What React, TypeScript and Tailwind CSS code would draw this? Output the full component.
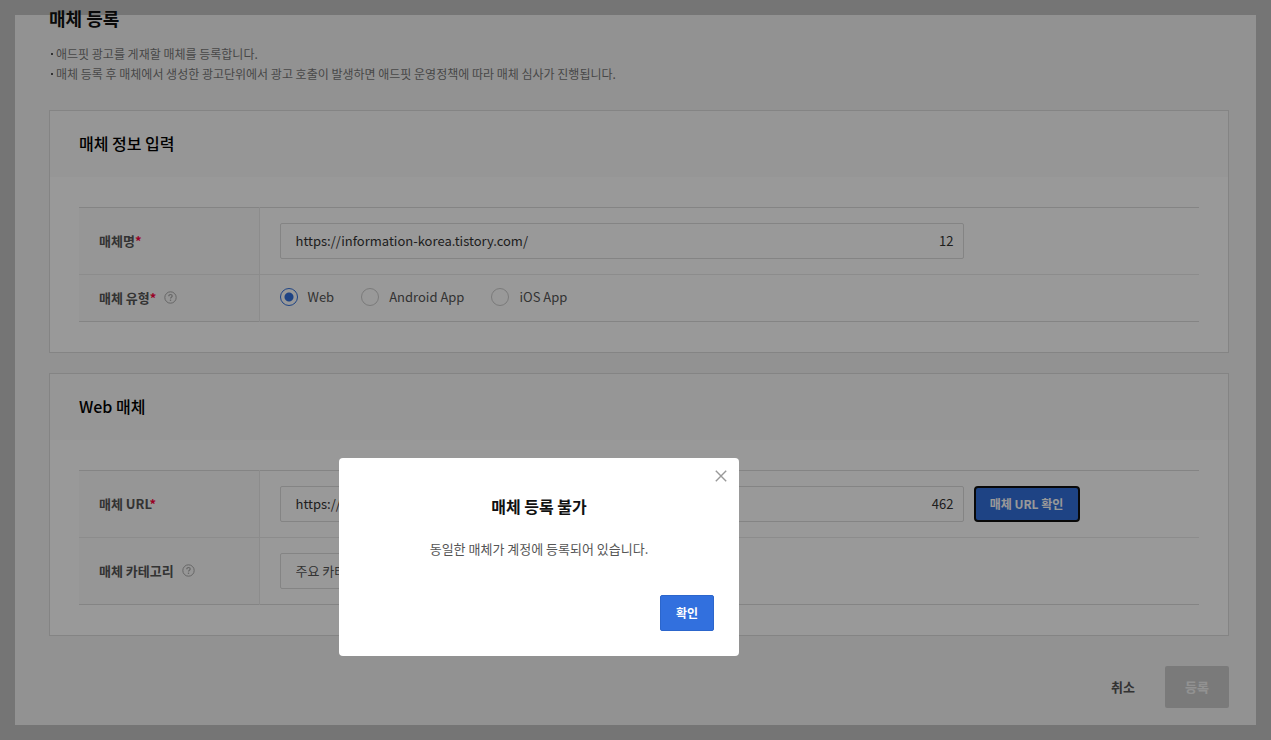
import { useState } from 'react'
import type { ReactNode } from 'react'

const NOTICES = [
    '애드핏 광고를 게재할 매체를 등록합니다.',
    '매체 등록 후 매체에서 생성한 광고단위에서 광고 호출이 발생하면 애드핏 운영정책에 따라 매체 심사가 진행됩니다.',
]

const MEDIA_TYPES = ['Web', 'Android App', 'iOS App']

function HelpButton({ label }: { label: string }) {
    return (
        <button type="button" aria-label={label} className="ml-2 shrink-0">
            <svg width="13" height="13" viewBox="0 0 13 13" fill="none" stroke="#aaaaaa">
                <circle cx="6.5" cy="6.5" r="5.7" />
                <path d="M4.8 5.2c0-1 .7-1.7 1.7-1.7s1.7.6 1.7 1.5c0 1.2-1.7 1.2-1.7 2.6" strokeWidth="1.2" />
                <path d="M6.5 8.6v1.3" strokeWidth="1.3" />
            </svg>
        </button>
    )
}

function Card({ title, children }: { title: string; children: ReactNode }) {
    return (
        <section className="border border-[#dcdcdc] bg-white">
            <h2 className="bg-[#fafafa] px-[29px] pt-5 pb-[22px] text-base leading-6 font-medium text-black">{title}</h2>
            <div className="px-[29px] py-[30px]">
                <table className="w-full border-collapse border-y border-[#dcdcdc]">
                    <tbody>{children}</tbody>
                </table>
            </div>
        </section>
    )
}

interface RowProps {
    label: string
    htmlFor?: string
    required?: boolean
    help?: boolean
    children: ReactNode
}

function Row({ label, htmlFor, required, help, children }: RowProps) {
    return (
        <tr className="border-t border-[#e9e9e9] first:border-t-0">
            <th scope="row" className="w-[180px] border-r border-[#e9e9e9] bg-[#fafafa] pb-px pl-5 text-left text-[13px] leading-5 font-bold text-[#555555]">
                <div className="flex items-center">
                    <label htmlFor={htmlFor}>
                        {label}
                        {required && <span className="text-[#ff0040]">*</span>}
                    </label>
                    {help && <HelpButton label={`${label} 도움말`} />}
                </div>
            </th>
            <td className="px-5 py-[15px]">{children}</td>
        </tr>
    )
}

interface CountedInputProps {
    id: string
    value: string
    count: number
    onChange: (value: string) => void
}

function CountedInput({ id, value, count, onChange }: CountedInputProps) {
    return (
        <div className="flex h-9 w-full max-w-[684px] items-center rounded-xs border border-[#dcdcdc] bg-white pr-[9px] pl-[15px] text-[13px] text-[#333333]">
            <input
                id={id}
                type="text"
                value={value}
                onChange={(e) => onChange(e.target.value)}
                className="min-w-0 flex-1 bg-transparent outline-none"
            />
            <span>{count}</span>
        </div>
    )
}

function AlertDialog({ onClose }: { onClose: () => void }) {
    return (
        <div
            role="alertdialog"
            aria-modal="true"
            aria-labelledby="alert-title"
            className="absolute top-[458px] left-[339px] w-[400px] rounded bg-white px-[25px] pt-9 pb-[25px]"
        >
            <button type="button" aria-label="닫기" onClick={onClose} className="absolute top-3 right-3">
                <svg width="12" height="12" viewBox="0 0 12 12" fill="none" stroke="#999999" strokeWidth="1.4">
                    <path d="M.8.8l10.4 10.4M11.2.8L.8 11.2" />
                </svg>
            </button>
            <h2 id="alert-title" className="text-center text-base leading-6 font-bold text-[#111111]">매체 등록 불가</h2>
            <p className="mt-[21px] text-center text-[13px] leading-5 text-[#555555]">동일한 매체가 계정에 등록되어 있습니다.</p>
            <div className="mt-9 flex justify-end">
                <button
                    type="button"
                    onClick={onClose}
                    className="h-9 rounded-xs border border-[#2c66cc] bg-[#3270de] px-[15px] text-xs font-bold text-white"
                >
                    확인
                </button>
            </div>
        </div>
    )
}

export default function App() {
    const [name, setName] = useState('https://information-korea.tistory.com/')
    const [url, setUrl] = useState('https://information-korea.tistory.com/')
    const [mediaType, setMediaType] = useState('Web')
    const [alertOpen, setAlertOpen] = useState(true)

    return (
        <div className="relative flex min-h-screen bg-[#c4c4c4] p-[15px] font-['Noto_Sans_CJK_KR','Noto_Sans',sans-serif]">
            <main className="min-w-0 flex-1 bg-[#f4f4f4] pr-[27px] pb-[17px] pl-[34px]">
                <h1 className="-mt-[9px] text-lg leading-6 font-bold text-[#111111]">매체 등록</h1>
                <ul className="mt-[14px] text-xs leading-5 text-[#777777]">
                    {NOTICES.map((notice) => (
                        <li key={notice} className="flex items-center gap-[3px] pl-0.5">
                            <span className="size-0.5 shrink-0 bg-[#555555]" />
                            {notice}
                        </li>
                    ))}
                </ul>

                <form onSubmit={(e) => e.preventDefault()} className="mt-[26px]">
                    <div className="flex flex-col gap-5">
                        <Card title="매체 정보 입력">
                            <Row label="매체명" htmlFor="media-name" required>
                                <CountedInput id="media-name" value={name} count={12} onChange={setName} />
                            </Row>
                            <Row label="매체 유형" required help>
                                <div role="radiogroup" aria-label="매체 유형" className="-mt-1 -mb-0.5 flex h-[22px] items-center gap-[27px]">
                                    {MEDIA_TYPES.map((type) => (
                                        <label key={type} className="flex items-center gap-2.5 text-[13px] text-[#555555]">
                                            <input
                                                type="radio"
                                                name="media-type"
                                                checked={mediaType === type}
                                                onChange={() => setMediaType(type)}
                                                className="size-[18px] appearance-none rounded-full border border-[#cccccc] bg-white checked:border-[#3371dc] checked:bg-[radial-gradient(circle,#3371dc_4px,transparent_5px)]"
                                            />
                                            {type}
                                        </label>
                                    ))}
                                </div>
                            </Row>
                        </Card>

                        <Card title="Web 매체">
                            <Row label="매체 URL" htmlFor="media-url" required>
                                <div className="flex gap-2.5">
                                    <CountedInput id="media-url" value={url} count={462} onChange={setUrl} />
                                    <button
                                        type="button"
                                        onClick={() => setAlertOpen(true)}
                                        className="h-9 w-[106px] shrink-0 rounded border-2 border-[#101010] bg-[#3371dc] text-xs font-bold text-white"
                                    >
                                        매체 URL 확인
                                    </button>
                                </div>
                            </Row>
                            <Row label="매체 카테고리" htmlFor="media-category" help>
                                <select
                                    id="media-category"
                                    className="block h-9 w-[300px] appearance-none rounded-xs border border-[#dcdcdc] bg-white px-[15px] text-[13px] text-[#555555]"
                                >
                                    <option>주요 카테고리</option>
                                </select>
                            </Row>
                        </Card>
                    </div>

                    <div className="mt-[30px] flex justify-end gap-[30px] text-[13px] font-bold">
                        <button type="button" className="text-[#555555]">취소</button>
                        <button type="submit" disabled className="h-[42px] w-16 rounded-xs bg-[#cccccc] text-[#f4f4f4]">등록</button>
                    </div>
                </form>
            </main>

            {alertOpen && (
                <>
                    <div className="absolute inset-0 bg-black/40" />
                    <AlertDialog onClose={() => setAlertOpen(false)} />
                </>
            )}
        </div>
    )
}
